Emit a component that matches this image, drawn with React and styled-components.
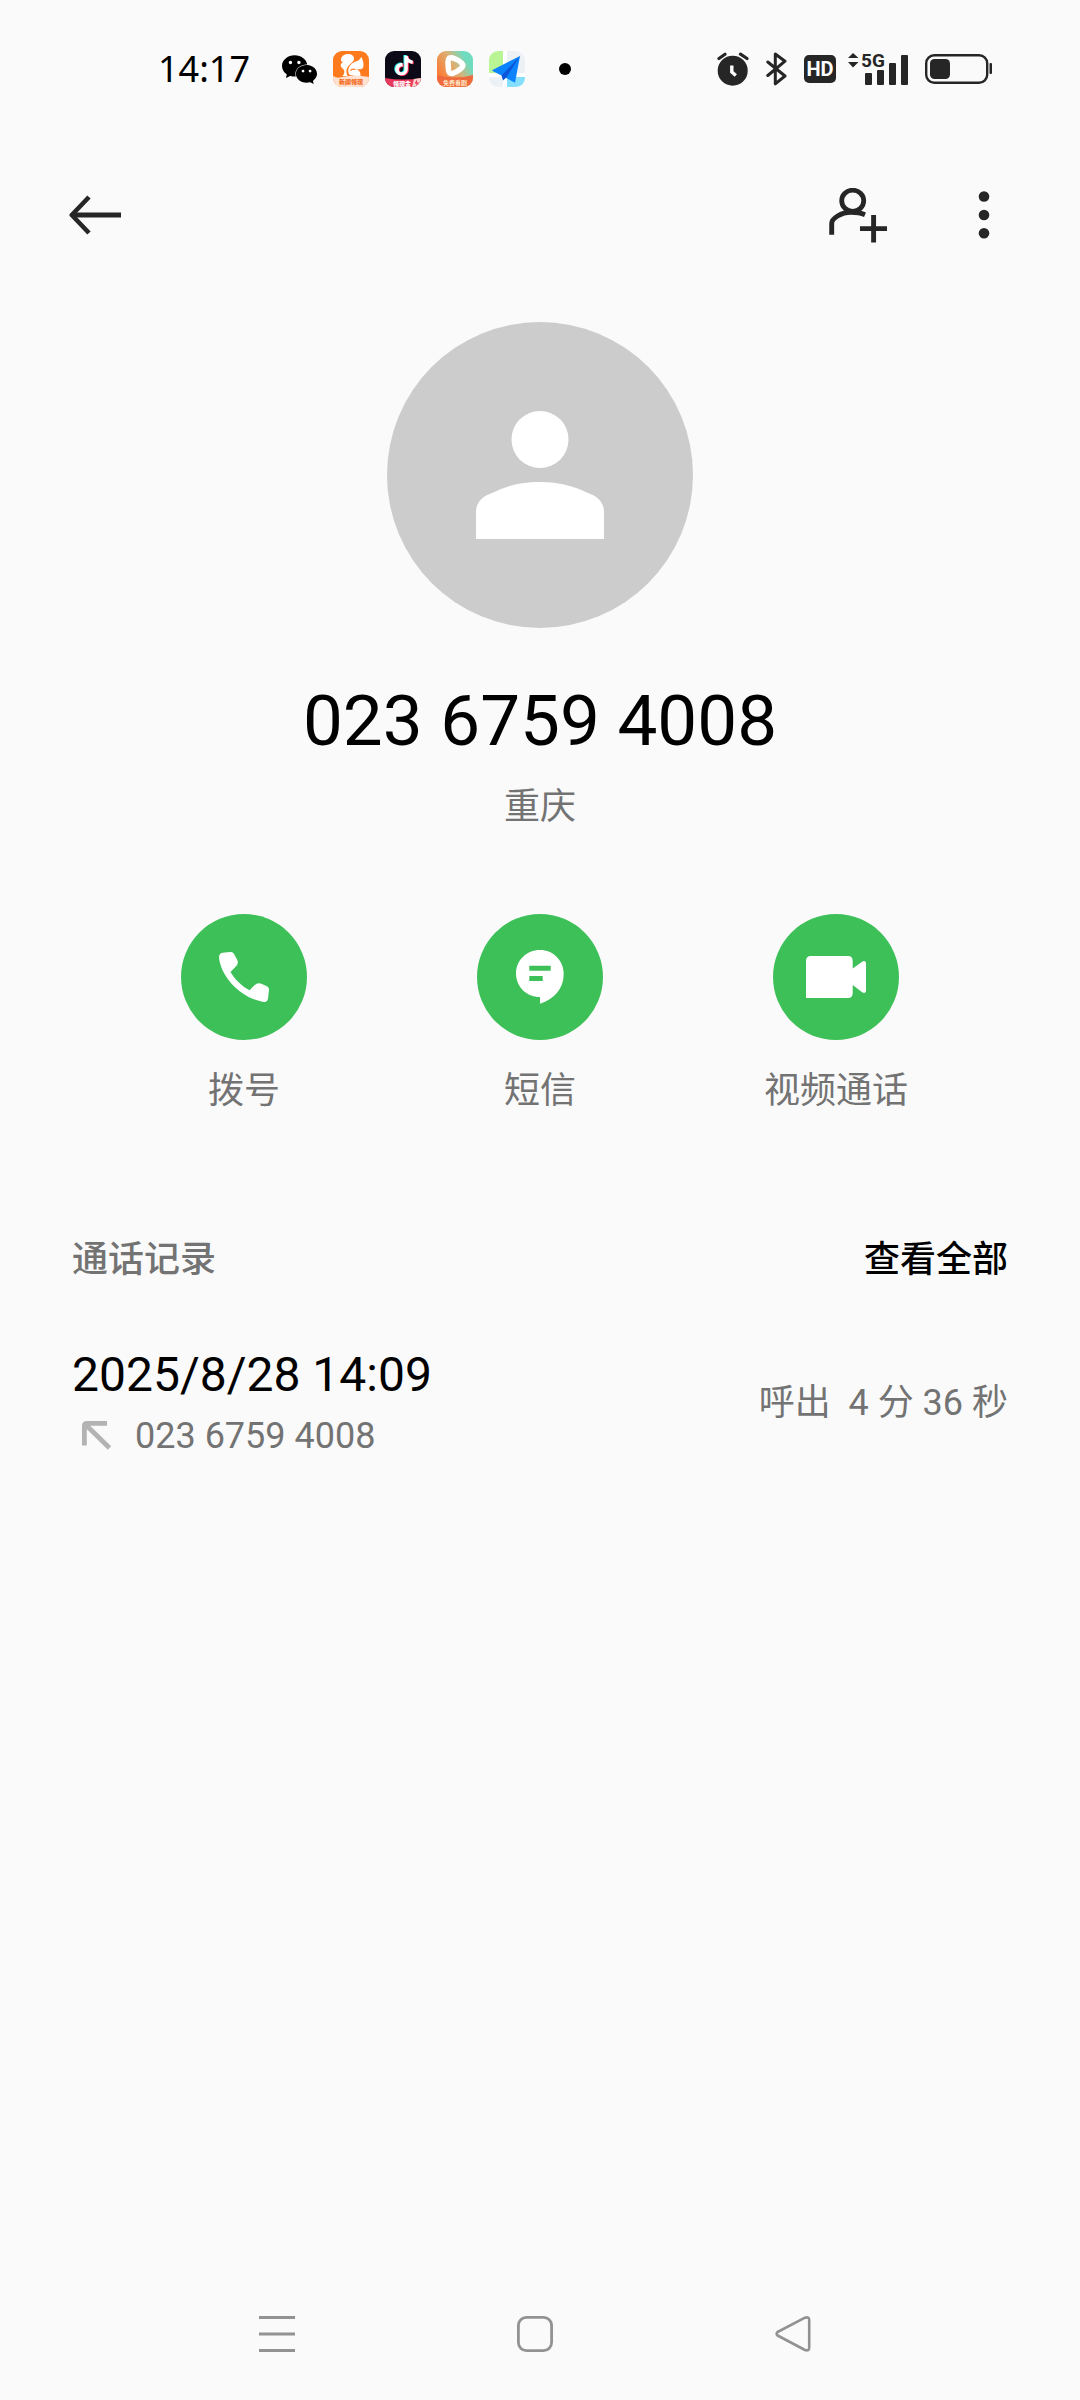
import React from "react";
import styled, { createGlobalStyle } from "styled-components";
import { SiTiktok, SiWechat } from "react-icons/si";

const GlobalStyle = createGlobalStyle`
  * {
    box-sizing: border-box;
  }
  body {
    margin: 0;
    background: #fafafa;
    color: #000;
    font-family: Roboto, "Noto Sans CJK SC", sans-serif;
  }
  button {
    border: 0;
    padding: 0;
    background: none;
    color: inherit;
    font: inherit;
    cursor: pointer;
  }
  svg {
    display: block;
    flex: none;
  }
`;

const Page = styled.div`
  display: flex;
  flex-direction: column;
  min-height: 100vh;
`;

const StatusBar = styled.div`
  display: flex;
  align-items: center;
  justify-content: space-between;
  height: 138px;
  padding: 0 88px 0 158px;
  color: #262626;
`;

const StatusGroup = styled.div`
  display: flex;
  align-items: center;
  gap: ${props => props.$gap}px;
`;

const Clock = styled.time`
  margin-right: 16px;
  color: #000;
  font-family: "Noto Sans", sans-serif;
  font-size: 36px;
  line-height: 48px;
`;

const MoreDot = styled.span`
  width: 12px;
  height: 12px;
  margin-left: 18px;
  border-radius: 50%;
  background: #000;
`;

const HdBadge = styled.span`
  width: 32px;
  height: 28px;
  border-radius: 5px;
  background: #262626;
  color: #fff;
  font-size: 20px;
  font-weight: 700;
  line-height: 28px;
  text-align: center;
`;

const Header = styled.header`
  display: flex;
  align-items: center;
  justify-content: space-between;
  height: 154px;
  padding: 0 60px;
  color: #262626;
`;

const HeaderActions = styled.div`
  display: flex;
  gap: 54px;
`;

const IconButton = styled.button`
  display: flex;
  align-items: center;
  justify-content: center;
  width: 72px;
  height: 72px;
`;

const Profile = styled.section`
  display: flex;
  flex-direction: column;
  align-items: center;
  padding-top: 30px;
`;

const Avatar = styled.div`
  display: flex;
  align-items: center;
  justify-content: center;
  width: 306px;
  height: 306px;
  border-radius: 50%;
  background: #ccc;
`;

const PhoneNumber = styled.h1`
  margin: 51px 0 0;
  font-size: 71px;
  font-weight: 400;
  line-height: 84px;
`;

const Location = styled.p`
  margin: 20px 0 0;
  color: #737373;
  font-size: 36px;
  line-height: 48px;
`;

const Actions = styled.div`
  display: grid;
  grid-template-columns: repeat(3, 1fr);
  margin-top: 83px;
  padding: 0 96px;
`;

const Action = styled.button`
  display: flex;
  flex-direction: column;
  align-items: center;
  gap: 27px;
`;

const ActionCircle = styled.span`
  display: flex;
  align-items: center;
  justify-content: center;
  width: 126px;
  height: 126px;
  border-radius: 50%;
  background: #3cc057;
`;

const ActionLabel = styled.span`
  color: #737373;
  font-size: 36px;
  line-height: 48px;
`;

const Records = styled.section`
  margin-top: 121px;
  padding: 0 72px;
`;

const RecordsHeader = styled.div`
  display: flex;
  align-items: center;
  justify-content: space-between;
`;

const RecordsTitle = styled.h2`
  margin: 0;
  color: #737373;
  font-size: 36px;
  font-weight: 500;
  line-height: 48px;
`;

const ViewAll = styled.button`
  font-size: 36px;
  font-weight: 500;
  line-height: 48px;
`;

const RecordRow = styled.div`
  display: flex;
  align-items: center;
  justify-content: space-between;
  margin-top: 61px;
  color: #737373;
  font-size: 36px;
  line-height: 48px;
`;

const RecordDate = styled.div`
  color: #000;
  font-size: 48px;
  line-height: 60px;
`;

const RecordNumber = styled.div`
  display: flex;
  align-items: center;
  gap: 23px;
  margin-top: 7px;
  padding-left: 10px;
`;

const Duration = styled.span`
  white-space: pre;
`;

const NavBar = styled.nav`
  display: grid;
  grid-template-columns: repeat(3, 1fr);
  justify-items: center;
  margin-top: auto;
  padding: 0 158px 30px 148px;
  color: #929292;
`;

const UcIcon = () => (
  <svg width="36" height="36" viewBox="0 0 36 36">
    <defs>
      <clipPath id="ucClip">
        <rect width="36" height="36" rx="9" />
      </clipPath>
    </defs>
    <g clipPath="url(#ucClip)">
      <rect width="36" height="36" fill="#ff7a1c" />
      <path
        fill="#fff"
        d="M8 9C8 4 14 2 18 3.500C22 5.500 22 9 18.500 12C14.500 15 12 18.500 14.500 25H9.500C12.500 21.500 11.500 19 9.500 17.500C7 15 7 12.500 10.500 11C8.500 11 8 10 8 9Z"
      />
      <path
        fill="#fff"
        d="M30.500 14.500C30.500 10 29.500 9 28.500 6L25.500 9.500C19 11 14 16 15.500 22C16.300 25 20 25 27.500 25C28 22 26.500 19.500 23.500 18C27.500 19 30.500 18 30.500 14.500Z"
      />
      <path d="M22.500 18.500Q19.500 17.500 17.500 19.500" fill="none" stroke="#ff7a1c" strokeWidth="1.200" />
      <path fill="#ffe2d2" d="M0 25Q4 28 9 26Q22 23 36 26V36H0Z" />
      <text x="18" y="33" textAnchor="middle" fontSize="6" fontWeight="900" fill="#f26a1b">
        新闻领现
      </text>
    </g>
  </svg>
);

const DouyinIcon = () => (
  <svg width="36" height="36" viewBox="0 0 36 36">
    <defs>
      <clipPath id="dyClip">
        <rect width="36" height="36" rx="9" />
      </clipPath>
    </defs>
    <g clipPath="url(#dyClip)">
      <rect width="36" height="36" fill="#0c0a17" />
      <SiTiktok x="8" y="4" size="20" color="#25f4ee" />
      <SiTiktok x="10" y="5" size="20" color="#fe2c55" />
      <SiTiktok x="9" y="4.5" size="20" color="#fff" />
      <path fill="#e93a5e" d="M0 27Q18 30 36 27V36H0Z" />
      <path fill="#ffd4cd" d="M29 28L36 27V36H27Z" />
      <path fill="#e93a5e" d="M32 28.5L29.5 32.5H31.5L31 35.5L34 31.5H32Z" />
      <text x="17" y="34.5" textAnchor="middle" fontSize="6" fontWeight="900" fill="#fff">
        领现金
      </text>
    </g>
  </svg>
);

const VideoAppIcon = () => (
  <svg width="36" height="36" viewBox="0 0 36 36">
    <defs>
      <clipPath id="vaClip">
        <rect width="36" height="36" rx="9" />
      </clipPath>
      <linearGradient id="vaFill" x1="0" y1="0.7" x2="1" y2="0.1">
        <stop offset="0.1" stopColor="#f9803a" />
        <stop offset="0.5" stopColor="#d9b276" />
        <stop offset="0.8" stopColor="#6fdcc0" />
      </linearGradient>
    </defs>
    <g clipPath="url(#vaClip)">
      <rect width="36" height="36" fill="url(#vaFill)" />
      <path
        d="M11 11Q11 5.500 16 7Q22 9 25 12.500Q27 15 24 17.500Q20 21 15.500 22.500Q12 23 11.500 19Z"
        fill="none"
        stroke="#fff"
        strokeWidth="5.500"
        strokeLinejoin="round"
      />
      <path fill="#ee6a3c" d="M0 24Q18 29 36 24V36H0Z" />
      <text x="18" y="34" textAnchor="middle" fontSize="6" fontWeight="700" fill="#ffe9c9">
        免费看剧
      </text>
    </g>
  </svg>
);

const MapAppIcon = () => (
  <svg width="36" height="36" viewBox="0 0 36 36">
    <defs>
      <clipPath id="mapClip">
        <rect width="36" height="36" rx="9" />
      </clipPath>
    </defs>
    <g clipPath="url(#mapClip)">
      <rect width="36" height="36" fill="#fff" />
      <path fill="#b9f595" d="M0 0H14V22H0Z" />
      <path fill="#ecf1f6" d="M18 0H36V22H18ZM0 26H14V36H0Z" />
      <path fill="#86defd" d="M18 26H36V36H18Z" />
    </g>
    <path fill="#0b83ff" d="M31 5L3.500 19Q3 20 4.500 20.600L12.500 24.500L26 31.700Z" />
    <path fill="#0a55d8" d="M31 5L12.500 24.500L14 29.500L17 26.800Z" />
  </svg>
);

const AlarmIcon = () => (
  <svg width="32" height="34" viewBox="0 0 32 34" fill="none" strokeLinecap="round">
    <circle cx="15.700" cy="18.700" r="15" fill="currentColor" />
    <path d="M2 6.500L8 2.200M23.500 2.200L30 6.500" stroke="currentColor" strokeWidth="3.200" />
    <path d="M14.800 13.500V20L18.800 23.600" stroke="#fff" strokeWidth="3.400" strokeLinecap="butt" />
  </svg>
);

const BluetoothIcon = () => (
  <svg width="21" height="34" viewBox="0 0 21 34">
    <path
      d="M1.800 10L19 24L9.300 31.800V2L19 9.200L1.800 23.500"
      fill="none"
      stroke="currentColor"
      strokeWidth="3"
      strokeLinecap="round"
      strokeLinejoin="round"
    />
  </svg>
);

const SignalIcon = () => (
  <svg width="60" height="44" viewBox="0 -5 60 44" fill="currentColor">
    <path d="M0 6L5 1L10.500 6ZM0 10H10.500L5 15.500Z" />
    <rect x="17" y="21" width="7" height="12" rx="1" />
    <rect x="29" y="18" width="7" height="15" rx="1" />
    <rect x="41" y="11" width="7" height="22" rx="1" />
    <rect x="53" y="3" width="7" height="30" rx="1" />
    <text
      x="13"
      y="15"
      fontSize="19"
      fontWeight="700"
      stroke="#fafafa"
      strokeWidth="2"
      paintOrder="stroke"
    >
      5G
    </text>
  </svg>
);

const BatteryIcon = () => (
  <svg width="67" height="30" viewBox="0 0 67 30" fill="currentColor">
    <rect
      x="1.200"
      y="1.200"
      width="61"
      height="27.600"
      rx="8"
      fill="none"
      stroke="currentColor"
      strokeWidth="2.400"
    />
    <rect x="5" y="5" width="20" height="20" rx="4.500" />
    <rect x="64.500" y="9" width="2.500" height="11" rx="1" />
  </svg>
);

const BackIcon = () => (
  <svg width="54" height="40" viewBox="0 0 54 40" fill="none" stroke="currentColor">
    <path d="M20 2L2.800 20L20 38" strokeWidth="4.600" strokeLinejoin="round" />
    <path d="M4 20H52" strokeWidth="5" />
  </svg>
);

const AddContactIcon = () => (
  <svg width="58" height="55" viewBox="0 0 58 55" fill="none" stroke="currentColor">
    <ellipse cx="23.700" cy="12.800" rx="11" ry="10.600" strokeWidth="4.800" />
    <path d="M2.700 46.700V35.500C2.700 30.500 12 24.300 22 24.300C28 24.300 32 25 36 26.700" strokeWidth="4.900" />
    <path d="M44.600 27V54.500M31 40.600H58" strokeWidth="4.900" />
  </svg>
);

const MoreIcon = () => (
  <svg width="12" height="50" viewBox="0 0 12 50" fill="currentColor">
    <circle cx="6" cy="6.500" r="5.300" />
    <circle cx="6" cy="25" r="5.300" />
    <circle cx="6" cy="43.300" r="5.300" />
  </svg>
);

const PersonIcon = () => (
  <svg width="128" height="128" viewBox="0 0 128 128" fill="#fff">
    <circle cx="64" cy="28.500" r="28.500" />
    <path d="M0 128V101C0 91 7 85 16 82C31 75 44 71 64 71C84 71 97 75 112 82C121 85 128 91 128 101V128Z" />
  </svg>
);

const CallIcon = () => (
  <svg width="50" height="50" viewBox="0 0 50 50" fill="#fff">
    <path d="M0 5.500Q0 1.300 3.500 .8L11 0Q13.800-.2 15 2L18.300 8Q19.700 11 17.500 13.800L11.500 20C16 27.500 22.500 34 30.500 38.300L35.500 33.300Q38.500 30.300 42.500 31.800L48.300 34.600Q50.200 35.800 50 38L49 46.500Q48.400 50.300 44.500 50C23 46.500 2 26 0 5.500Z" />
  </svg>
);

const MessageIcon = () => (
  <svg width="48" height="54" viewBox="0 0 48 54" fill="#fff">
    <path
      fillRule="evenodd"
      d="M24 0C37.300 0 47.700 10.500 47.700 24C47.700 39 38 49 24 53.700V47C10.500 47 0 36.800 0 23.500C0 10.500 10.500 0 24 0ZM13.300 15.700V20.700H34.700V15.700ZM13.300 26V31H26.700V26Z"
    />
  </svg>
);

const VideoIcon = () => (
  <svg width="60" height="42" viewBox="0 0 60 42" fill="#fff">
    <path d="M5 0H42Q46.700 0 46.700 5V12.500L56.500 5.400Q60 4 60 7.500V34.500Q60 38 56.500 36.500L46.700 29V37Q46.700 42 42 42H0V5Q0 0 5 0Z" />
  </svg>
);

const OutgoingIcon = () => (
  <svg width="30" height="30" viewBox="0 0 30 30" fill="none" stroke="#b3b3b3" strokeWidth="4.800">
    <path d="M2.400 24.500V5Q2.400 2.400 5 2.400H25" />
    <path d="M4 4L27.500 27" />
  </svg>
);

const RecentsIcon = () => (
  <svg width="36" height="36" viewBox="0 0 36 36" stroke="currentColor" strokeWidth="3">
    <path d="M0 1.500H36M0 18H36M0 34.500H36" />
  </svg>
);

const HomeIcon = () => (
  <svg width="36" height="36" viewBox="0 0 36 36" fill="none" stroke="currentColor">
    <rect x="1.400" y="1.400" width="33.200" height="33.200" rx="8" strokeWidth="2.800" />
  </svg>
);

const NavBackIcon = () => (
  <svg width="36" height="36" viewBox="0 0 36 36" fill="none" stroke="currentColor">
    <path
      d="M2.600 16L30 1.700Q34.200 .500 34.200 4V31.500Q34.200 35.300 30 34L2.600 19.500Q.700 17.800 2.600 16Z"
      strokeWidth="2.600"
      strokeLinejoin="round"
    />
  </svg>
);

const actions = [
  { label: "拨号", Icon: CallIcon },
  { label: "短信", Icon: MessageIcon },
  { label: "视频通话", Icon: VideoIcon }
];

const navItems = [
  { label: "最近任务", Icon: RecentsIcon },
  { label: "主屏幕", Icon: HomeIcon },
  { label: "返回", Icon: NavBackIcon }
];

const phone = "023 6759 4008";

const App = () => (
  <Page>
    <GlobalStyle />
    <StatusBar>
      <StatusGroup $gap={16}>
        <Clock>14:17</Clock>
        <SiWechat size={35} color="#000" />
        <UcIcon />
        <DouyinIcon />
        <VideoAppIcon />
        <MapAppIcon />
        <MoreDot />
      </StatusGroup>
      <StatusGroup $gap={17}>
        <AlarmIcon />
        <BluetoothIcon />
        <StatusGroup $gap={12}>
          <HdBadge>HD</HdBadge>
          <SignalIcon />
        </StatusGroup>
        <BatteryIcon />
      </StatusGroup>
    </StatusBar>
    <Header>
      <IconButton aria-label="返回">
        <BackIcon />
      </IconButton>
      <HeaderActions>
        <IconButton aria-label="添加联系人">
          <AddContactIcon />
        </IconButton>
        <IconButton aria-label="更多">
          <MoreIcon />
        </IconButton>
      </HeaderActions>
    </Header>
    <main>
      <Profile>
        <Avatar>
          <PersonIcon />
        </Avatar>
        <PhoneNumber>{phone}</PhoneNumber>
        <Location>重庆</Location>
      </Profile>
      <Actions>
        {actions.map(({ label, Icon }) => (
          <Action key={label}>
            <ActionCircle>
              <Icon />
            </ActionCircle>
            <ActionLabel>{label}</ActionLabel>
          </Action>
        ))}
      </Actions>
      <Records>
        <RecordsHeader>
          <RecordsTitle>通话记录</RecordsTitle>
          <ViewAll>查看全部</ViewAll>
        </RecordsHeader>
        <RecordRow>
          <div>
            <RecordDate>2025/8/28 14:09</RecordDate>
            <RecordNumber>
              <OutgoingIcon />
              {phone}
            </RecordNumber>
          </div>
          <Duration>{"呼出  4 分 36 秒"}</Duration>
        </RecordRow>
      </Records>
    </main>
    <NavBar>
      {navItems.map(({ label, Icon }) => (
        <IconButton key={label} aria-label={label}>
          <Icon />
        </IconButton>
      ))}
    </NavBar>
  </Page>
);

export default App;
